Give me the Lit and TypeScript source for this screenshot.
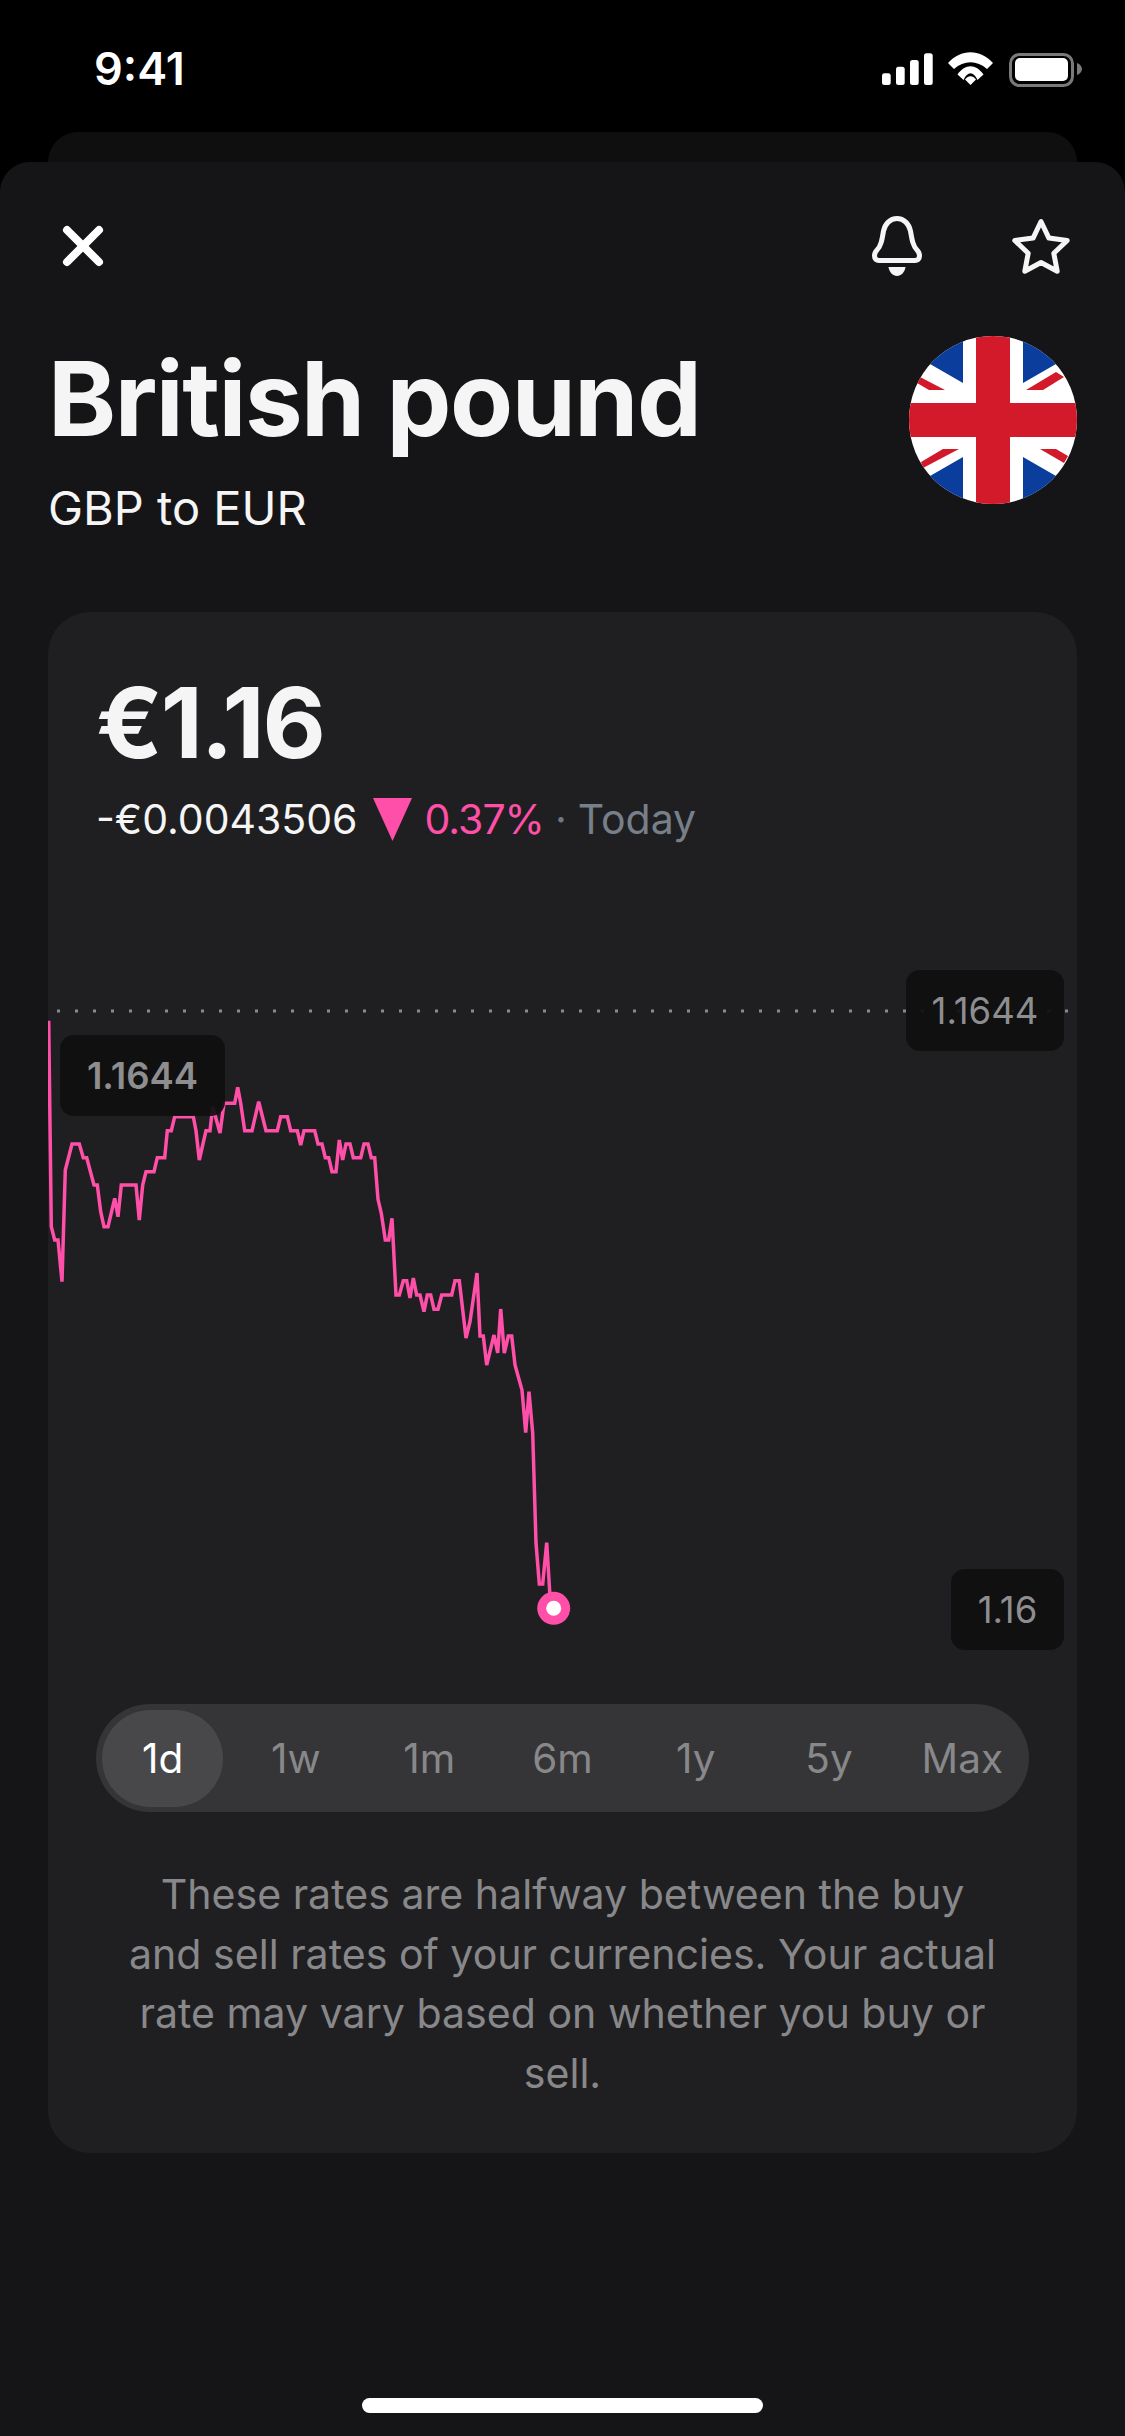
import { LitElement, html, css } from "lit";
import { customElement } from "lit/decorators.js";

const LINE = "48.7,1020.7 51.3,1226.7 54.7,1240 58,1240 62,1281.7 65.3,1170 72,1144 79.3,1144 83.3,1157.7 86.7,1157.7 94,1185 97.3,1185 100.7,1211.7 104,1226.7 108,1226.7 114.7,1198.3 118,1216.7 121.3,1185 136,1185 139.3,1220 142.7,1185 146,1171.7 154,1171.7 157.3,1157.7 164.7,1157.7 167.3,1130.7 171.3,1130.7 174.7,1116.7 193.3,1116.7 196,1130.7 199.3,1160 206,1130.7 210,1130.7 212.7,1106.7 220,1133 224,1103.3 234.7,1103.3 237.7,1087.3 240.7,1103.3 244.7,1130.7 252,1130.7 258.7,1101.7 266,1130.7 277.3,1130.7 280.7,1116.7 287.3,1116.7 290.7,1130.7 297.3,1130.7 300.7,1145 304,1130.7 314.7,1130.7 318,1144 322,1144 325.3,1157.7 328.7,1157.7 332,1171.7 336,1171.7 339.3,1140 342.7,1160 346,1144 350,1144 353.3,1157.7 360.7,1157.7 364,1144 368,1144 371.3,1157.7 374.7,1157.7 378,1199.3 381.3,1213.3 385.3,1240 388.7,1240 392,1218.3 396,1295 399.3,1295 403.3,1280.7 406.7,1280.7 410,1298 413.3,1278 416.7,1295 420,1295 424,1311.7 427.3,1295 430.7,1295 434,1309.3 438,1309.3 441.7,1295 451.7,1295 455,1280.7 459.3,1280.7 466,1338 470,1321.7 477,1273 480,1336 483.3,1336 486.7,1365 494,1335 497.7,1353 500.7,1309 504.3,1353 508.3,1336 511.7,1336 515,1365 522,1390 525.7,1432.7 529,1391.7 532.7,1433 536,1543 539.3,1584 542.7,1584 546.7,1542.7 550,1596.7";

const PERIODS = ["1d", "1w", "1m", "6m", "1y", "5y", "Max"];

@customElement("app-root")
export class AppRoot extends LitElement {
  static styles = css`
    :host { display: block; width: 1125px; height: 2436px; background: #000; font-family: Inter, "Liberation Sans", sans-serif; color: #f5f5f5; overflow: hidden; }
    .status { height: 132px; display: flex; justify-content: space-between; align-items: flex-start; padding: 0 40px 0 94px; box-sizing: border-box; }
    .time { font-weight: 600; font-size: 45px; line-height: 44px; margin-top: 47px; color: #fff; }
    .status-icons { margin-top: 50px; display: block; }
    .back { height: 30px; margin: 0 48px; background: #0f0f10; border-radius: 30px 30px 0 0; }
    .sheet { height: 2274px; background: #151517; border-radius: 30px 30px 0 0; padding: 54px 48px 0; box-sizing: border-box; position: relative; }
    .toolbar { height: 60px; display: flex; align-items: center; }
    .spacer { flex: 1; }
    .x { margin-left: 12px; }
    .bell { margin-right: 90px; }
    .star { margin-right: 7px; }
    .head { display: flex; justify-content: space-between; align-items: flex-start; margin-top: 60px; }
    h1 { margin: 8px 0 0; font-size: 103px; line-height: 110px; font-weight: 700; letter-spacing: -1.5px; }
    .sub { font-size: 47px; line-height: 56px; margin-top: 26px; font-weight: 400; }
    .flag { display: block; }
    .card { margin-top: 76px; height: 1541px; background: #1f1f21; border-radius: 42px; position: relative; box-sizing: border-box; padding: 54px 48px 0; }
    .price { font-size: 97.5px; line-height: 114px; font-weight: 700; letter-spacing: -2px; }
    .change { display: flex; align-items: center; font-size: 41px; line-height: 50px; margin-top: 14px; white-space: nowrap; }
    .tri { margin: 0 13px 0 15px; }
    .pink { color: #ff4fa8; letter-spacing: -1px; }
    .dot { color: #6f7780; margin: 0 11px; }
    .today { color: #77808a; }
    .chart { position: absolute; left: 0; top: 348px; width: 1028px; height: 700px; }
    .chart svg { position: absolute; left: 0; top: 0; }
    .tip { position: absolute; background: rgba(15, 15, 16, 0.93); color: #8e8e90; font-size: 36.5px; height: 81px; border-radius: 14px; display: flex; align-items: center; justify-content: center; box-sizing: border-box; }
    .tip-a { left: 12px; top: 75px; width: 165px; font-weight: 600; }
    .tip-b { left: 858px; top: 10px; width: 158px; }
    .tip-c { left: 903px; top: 609px; width: 113px; }
    .tabs { position: absolute; left: 48px; right: 48px; top: 1092px; height: 108px; background: #353537; border-radius: 54px; display: flex; align-items: center; box-sizing: border-box; }
    .tab { flex: 1 1 0; margin: 0 6px; height: 97px; display: flex; align-items: center; justify-content: center; font-size: 40.5px; color: #88888a; border-radius: 49px; }
    .tab.on { background: #48484a; color: #fff; }
    .note { position: absolute; left: 74px; right: 74px; top: 1253px; margin: 0; text-align: center; font-size: 41.1px; line-height: 59.6px; color: #88888a; }
    .home { position: absolute; left: 362px; width: 401px; top: 2236px; height: 15px; border-radius: 8px; background: #fff; }
  `;

  private flag() {
    return html`<svg class="flag" width="168" height="168" viewBox="0 0 168 168">
      <defs><clipPath id="c"><circle cx="84" cy="84" r="84"/></clipPath></defs>
      <g clip-path="url(#c)">
        <rect width="168" height="168" fill="#fff"/>
        <path fill="#0a3d9c" d="M54 0V47L21 28 0 0zM114 0V47L147 28 168 0zM54 168V121L21 140 0 168zM114 168V121L147 140 168 168z"/>
        <path fill="#d31a2b" d="M67 0H101V67H168V101H101V168H67V101H0V67H67z"/>
        <path fill="#d31a2b" d="M11 41L36 54H20L8 47zM147 36L155 41 134 54H117zM131 113H147L159 120 155 127zM34 113H50L14 132 12 126z"/>
      </g></svg>`;
  }

  render() {
    return html`
      <div class="status">
        <div class="time">9:41</div>
        <svg class="status-icons" width="205" height="40" viewBox="0 0 205 40">
          <g fill="#fff">
            <rect x="2" y="23.300" width="8.700" height="11.700" rx="2.500"/>
            <rect x="16" y="16.700" width="8.700" height="18.300" rx="2.500"/>
            <rect x="30" y="10" width="8.700" height="25" rx="2.500"/>
            <rect x="44" y="3.300" width="8.700" height="31.700" rx="2.500"/>
            <path d="M68 13C81-1.500 100-1.500 113 13L107 19C97 10 84 10 74 19Z"/>
            <path d="M77.500 24.500C85 13.500 96 13.500 103.500 24.500L97.500 30C93.500 21 87.500 21 83.500 30Z"/>
            <path d="M85 29.500C88 25 93 25 96 29.500L90.500 35Z"/>
            <rect x="135" y="8" width="53" height="23" rx="5"/>
            <path d="M197 13C200 14 202 16.500 202 19S200 24 197 25Z" fill="#7a7a7a"/>
          </g>
          <rect x="130.500" y="4.500" width="62" height="31" rx="9" fill="none" stroke="#7a7a7a" stroke-width="3"/>
        </svg>
      </div>
      <div class="back"></div>
      <div class="sheet">
        <div class="toolbar">
          <svg class="x" width="46" height="46" viewBox="0 0 46 46"><path d="M7 7L39 39M39 7L7 39" stroke="#fff" stroke-width="8" stroke-linecap="round"/></svg>
          <div class="spacer"></div>
          <svg class="bell" width="50" height="60" viewBox="0 0 50 60">
            <path d="M25 2.500C18 2.500 13 8 11.500 15C10 24 9 30 5 34C3 36 2.500 38 2.500 40C2.500 43 4.500 44.500 7 44.500H43C45.500 44.500 47.500 43 47.500 40C47.500 38 47 36 45 34C41 30 40 24 38.500 15C37 8 32 2.500 25 2.500Z" fill="none" stroke="#f5f5f5" stroke-width="5" stroke-linejoin="round"/>
            <path d="M16.500 51H33.500C33 56 29 60 25 60C21 60 17 56 16.500 51Z" fill="#f5f5f5"/>
          </svg>
          <svg class="star" width="58" height="56" viewBox="0 0 58 56"><path d="M29 3.500L36.900 20.100 55.200 22.500 41.800 35.200 45.200 53.200 29 44.500 12.800 53.200 16.200 35.200 2.800 22.500 21.100 20.100Z" fill="none" stroke="#f5f5f5" stroke-width="5" stroke-linejoin="round"/></svg>
        </div>
        <div class="head">
          <div>
            <h1>British pound</h1>
            <div class="sub">GBP to EUR</div>
          </div>
          ${this.flag()}
        </div>
        <div class="card">
          <div class="price">€1.16</div>
          <div class="change">
            <span>-€0.0043506</span>
            <svg class="tri" width="39" height="43" viewBox="0 0 39 43"><path d="M0 0H39L19.500 43z" fill="#ff4fa8"/></svg>
            <span class="pink">0.37%</span><span class="dot">·</span><span class="today">Today</span>
          </div>
          <div class="chart">
            <svg width="1028" height="700" viewBox="48 960 1028 700">
              <line x1="57" y1="1011" x2="1076" y2="1011" stroke="#8a8a8c" stroke-width="3" stroke-dasharray="3 15"/>
              <polyline points="${LINE}" fill="none" stroke="#ff4fa8" stroke-width="3.500" stroke-linejoin="miter"/>
              <circle cx="553.700" cy="1608.300" r="16.500" fill="#ff4fa8"/>
              <circle cx="553.700" cy="1608.300" r="7.500" fill="#fff"/>
            </svg>
            <div class="tip tip-a">1.1644</div>
            <div class="tip tip-b">1.1644</div>
            <div class="tip tip-c">1.16</div>
          </div>
          <div class="tabs">
            ${PERIODS.map((p, i) => html`<div class="tab ${i === 0 ? "on" : ""}">${p}</div>`)}
          </div>
          <p class="note">These rates are halfway between the buy and sell rates of your currencies. Your actual rate may vary based on whether you buy or sell.</p>
        </div>
        <div class="home"></div>
      </div>
    `;
  }
}
